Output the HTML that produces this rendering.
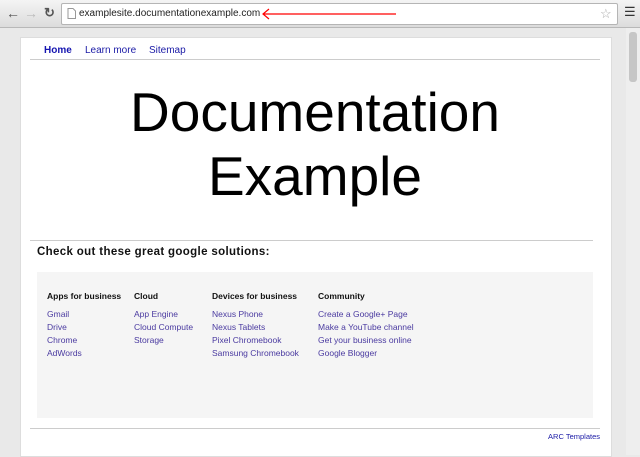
<!DOCTYPE html>
<html><head><style>
body{margin:0;width:640px;height:455px;overflow:hidden;background:#e9e9e9;font-family:"Liberation Sans",sans-serif;position:relative}
.tb{position:absolute;left:0;top:0;width:640px;height:27px;background:linear-gradient(#f4f4f4,#dcdcdc);border-bottom:1px solid #b8b8b8}
.url{position:absolute;left:61px;top:3px;width:555px;height:20px;background:#fff;border:1px solid #b5b5b5;border-radius:2px}
.a{position:absolute;font-size:10px}
.card{position:absolute;left:20px;top:37px;width:590px;height:418px;background:#fff;border:1px solid #ddd}
.nav{position:absolute;top:45px;font-size:10px;color:#1a1aa6}
h1{position:absolute;left:20px;width:590px;top:80px;margin:0;text-align:center;font-weight:normal;font-size:55px;line-height:64px;color:#000}
.col{position:absolute;top:290px;font-size:8.5px;line-height:13px;color:#4a3aa0}
.col b{display:block;color:#111;font-size:8.5px;margin-bottom:5px}
</style></head><body>
<div class="tb">
<span class="a" style="left:6px;top:5px;font-size:14px;color:#555">&#8592;</span>
<span class="a" style="left:24px;top:5px;font-size:14px;color:#bbb">&#8594;</span>
<span class="a" style="left:44px;top:5px;font-size:13px;color:#555;font-weight:bold">&#8635;</span>
<div class="url">
<svg style="position:absolute;left:5px;top:4px" width="9" height="11"><path d="M1 .5h5l2.5 2.5v7.5h-7.5z" fill="#fff" stroke="#999"/></svg>
<span class="a" style="left:17px;top:4px;font-size:10px;color:#222">examplesite.documentationexample.com</span>
<svg style="position:absolute;left:200px;top:4px" width="135" height="12"><path d="M1 6H134" stroke="red" stroke-width="1.2"/><path d="M7 1L1 6L7 11" stroke="red" fill="none" stroke-width="1.2"/></svg>
<span class="a" style="left:538px;top:2px;font-size:13px;color:#aaa">&#9734;</span>
</div>
<span class="a" style="left:624px;top:4px;font-size:13px;color:#333">&#9776;</span>
</div>
<div style="position:absolute;left:626px;top:28px;width:14px;height:427px;background:#eee"><div style="margin:4px 3px;height:50px;width:8px;background:#c6c6c6;border-radius:3px"></div></div>
<div class="card"></div>
<span class="nav" style="left:44px;font-weight:bold;color:#1515b0">Home</span>
<span class="nav" style="left:85px">Learn more</span>
<span class="nav" style="left:149px">Sitemap</span>
<div style="position:absolute;left:30px;top:59px;width:570px;height:1px;background:#ccc"></div>
<h1>Documentation<br>Example</h1>
<div style="position:absolute;left:30px;top:240px;width:563px;height:1px;background:#ccc"></div>
<div style="position:absolute;left:37px;top:246px;font-size:11.5px;font-weight:bold;color:#111;letter-spacing:.35px">Check out these great google solutions:</div>
<div style="position:absolute;left:37px;top:272px;width:556px;height:146px;background:#f5f5f5"></div>
<div class="col" style="left:47px"><b>Apps for business</b>Gmail<br>Drive<br>Chrome<br>AdWords</div>
<div class="col" style="left:134px"><b>Cloud</b>App Engine<br>Cloud Compute<br>Storage</div>
<div class="col" style="left:212px"><b>Devices for business</b>Nexus Phone<br>Nexus Tablets<br>Pixel Chromebook<br>Samsung Chromebook</div>
<div class="col" style="left:318px"><b>Community</b>Create a Google+ Page<br>Make a YouTube channel<br>Get your business online<br>Google Blogger</div>
<div style="position:absolute;left:30px;top:428px;width:570px;height:1px;background:#ccc"></div>
<div style="position:absolute;right:40px;top:432px;font-size:7.5px;color:#1a1aa6">ARC Templates</div>
</body></html>
